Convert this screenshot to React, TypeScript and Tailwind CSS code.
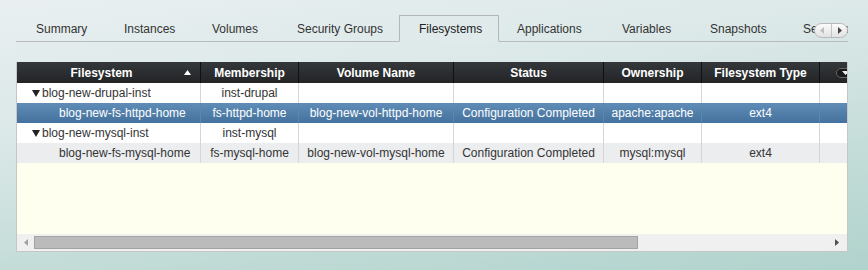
import React from "react";

const tabs: { label: string; w: number }[] = [
  { label: "Summary", w: 88 },
  { label: "Instances", w: 88 },
  { label: "Volumes", w: 85 },
  { label: "Security Groups", w: 120 },
  { label: "Filesystems", w: 100 },
  { label: "Applications", w: 105 },
  { label: "Variables", w: 88 },
  { label: "Snapshots", w: 93 },
  { label: "Services", w: 90 },
];

const cols = [184, 98, 155, 150, 98, 118, 29];

type Row = {
  cells: string[];
  group?: boolean;
  selected?: boolean;
  alt?: boolean;
};

const rows: Row[] = [
  { cells: ["blog-new-drupal-inst", "inst-drupal", "", "", "", "", ""], group: true },
  {
    cells: ["blog-new-fs-httpd-home", "fs-httpd-home", "blog-new-vol-httpd-home", "Configuration Completed", "apache:apache", "ext4", ""],
    selected: true,
  },
  { cells: ["blog-new-mysql-inst", "inst-mysql", "", "", "", "", ""], group: true },
  {
    cells: ["blog-new-fs-mysql-home", "fs-mysql-home", "blog-new-vol-mysql-home", "Configuration Completed", "mysql:mysql", "ext4", ""],
    alt: true,
  },
];

const headers = ["Filesystem", "Membership", "Volume Name", "Status", "Ownership", "Filesystem Type", ""];

export default function App() {
  return (
    <div
      className="w-[868px] h-[270px] overflow-hidden bg-[linear-gradient(172deg,#e9eff1_0%,#dbe8e8_35%,#c3dcd8_70%,#b1d3cd_100%)] text-[12px] text-[#333]"
      style={{ fontFamily: '"Liberation Sans", Arial, sans-serif' }}
    >
      {/* Tab strip */}
      <div className="relative ml-4 mt-[15px] w-[832px] h-[27px]">
        <div className="absolute left-0 right-0 bottom-0 h-px bg-[#b7bbbc]" />
        <div className="flex h-[27px] overflow-hidden pl-[2px]">
          {tabs.map((t) => {
            const active = t.label === "Filesystems";
            return (
              <div
                key={t.label}
                style={{ width: t.w }}
                className={
                  "relative shrink-0 h-[27px] border flex items-center leading-none whitespace-nowrap " +
                  (active
                    ? "pl-[19px] border-[#b3b7b8] border-b-transparent bg-[#e0eaeb] text-[#222] z-10"
                    : "pl-[17px] border-transparent text-[#333]")
                }
              >
                <span className="pt-[1px]">{t.label}</span>
              </div>
            );
          })}
        </div>
        {/* scroll buttons */}
        <div className="absolute right-0 top-[8px] w-[34px] h-[15px] rounded-full border border-[#b8b8b8] bg-[linear-gradient(#fbfbfb,#e2e2e2)] flex overflow-hidden z-20">
          <div className="flex-1 flex items-center justify-center border-r border-[#c4c4c4]">
            <svg width="5" height="7" viewBox="0 0 5 7">
              <path d="M4 0 L0 3.5 L4 7 Z" fill="#bdbdbd" />
            </svg>
          </div>
          <div className="flex-1 flex items-center justify-center">
            <svg width="5" height="7" viewBox="0 0 5 7">
              <path d="M1 0 L5 3.5 L1 7 Z" fill="#444" />
            </svg>
          </div>
        </div>
      </div>

      {/* Grid */}
      <div className="ml-4 mt-[20px] w-[832px] border-x border-b border-[#c6c6c6] bg-[#fffff0] overflow-hidden">
        {/* header */}
        <div className="flex h-[21px] bg-[linear-gradient(#35383b,#222426)] text-white font-bold">
          {headers.map((h, i) => (
            <div
              key={i}
              style={{ width: cols[i] }}
              className={
                "shrink-0 relative flex items-center justify-center h-full " +
                (i < headers.length - 1 ? "border-r border-[#111]" : "")
              }
            >
              {i === 0 ? (
                <>
                  <span className="pr-[14px]">{h}</span>
                  <svg className="absolute right-[9px] top-[8px]" width="7" height="5" viewBox="0 0 7 5">
                    <path d="M3.5 0 L7 5 L0 5 Z" fill="#fff" />
                  </svg>
                </>
              ) : i === headers.length - 1 ? (
                <div className="absolute left-[16px] top-[6px] w-[22px] h-[10px] rounded-full bg-[#1a1a1a] border border-[#666] flex items-center pl-[5px]">
                  <svg width="7" height="4" viewBox="0 0 7 4">
                    <path d="M0 0 L7 0 L3.5 4 Z" fill="#eee" />
                  </svg>
                </div>
              ) : (
                <span>{h}</span>
              )}
            </div>
          ))}
        </div>
        {/* rows */}
        {rows.map((r, ri) => (
          <div
            key={ri}
            className={
              "flex h-[20px] " +
              (r.selected
                ? "bg-[linear-gradient(#5f8db7,#44719d)] text-white"
                : r.alt
                ? "bg-[#ecedef]"
                : "bg-white")
            }
          >
            {r.cells.map((c, ci) => (
              <div
                key={ci}
                style={{ width: cols[ci] }}
                className={
                  "shrink-0 h-full flex items-center whitespace-nowrap " +
                  (ci < r.cells.length - 1
                    ? r.selected
                      ? "border-r border-[#5b86ae] "
                      : "border-r border-[#d6d6d6] "
                    : "") +
                  (ci === 0 ? (r.group ? "pl-[15px]" : "pl-[42px]") : "justify-center")
                }
              >
                {ci === 0 && r.group ? (
                  <>
                    <svg className="mr-[2px]" width="8" height="7" viewBox="0 0 8 7">
                      <path d="M0 0 L8 0 L4 7 Z" fill="#222" />
                    </svg>
                    <span>{c}</span>
                  </>
                ) : (
                  c
                )}
              </div>
            ))}
          </div>
        ))}
        <div className="h-[71px]" />
        {/* horizontal scrollbar */}
        <div className="h-[17px] bg-[#f0f0f0] flex items-center">
          <div className="w-[17px] flex items-center justify-center">
            <svg width="4" height="7" viewBox="0 0 4 7">
              <path d="M4 0 L0 3.5 L4 7 Z" fill="#a3a3a3" />
            </svg>
          </div>
          <div className="w-[604px] h-[13px] bg-[#bbbbbb] border border-[#a3a3a3]" />
          <div className="flex-1" />
          <div className="w-[17px] flex items-center justify-center mr-[2px]">
            <svg width="4" height="7" viewBox="0 0 4 7">
              <path d="M0 0 L4 3.5 L0 7 Z" fill="#505050" />
            </svg>
          </div>
        </div>
      </div>
    </div>
  );
}
